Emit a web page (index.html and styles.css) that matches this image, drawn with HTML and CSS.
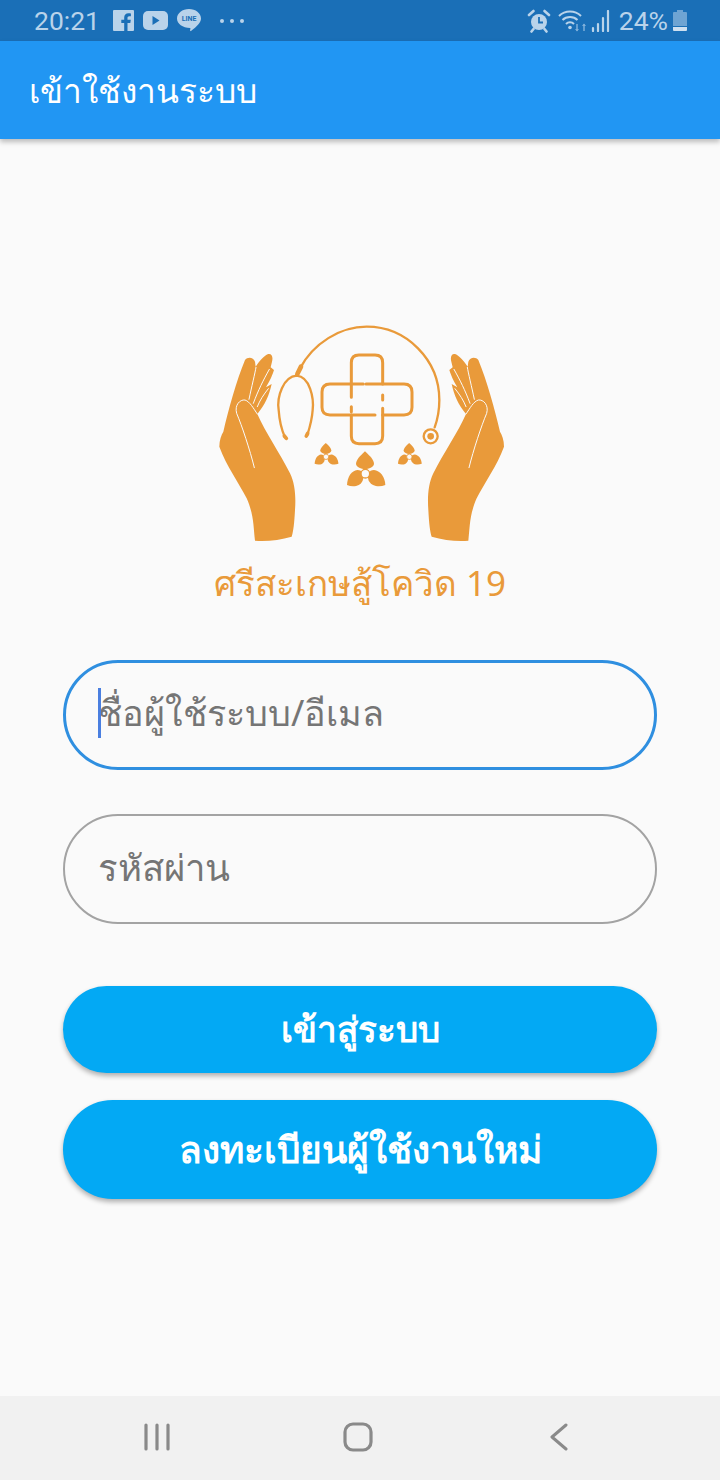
FILE: index.html
```html
<!DOCTYPE html>
<html lang="th">
<head>
	<meta charset="UTF-8">
	<title>เข้าใช้งานระบบ</title>
	<link rel="stylesheet" href="styles.css">
</head>
<body>
	<div class="status">
		<div class="status-left">
			<span class="clock">20:21</span>
			<svg class="ic-fb" width="21" height="21" viewBox="0 0 21 21"><path fill="#b9d3ea" d="M1 0h19a1 1 0 0 1 1 1v19a1 1 0 0 1-1 1h-5.500v-8h2.800l.5-3.200h-3.300V8c0-1 .4-1.700 1.800-1.700h1.600V3.400c-.8-.1-1.600-.2-2.500-.2-2.600 0-4.200 1.600-4.200 4.300v2.300H8.300V13h2.900v8H1a1 1 0 0 1-1-1V1a1 1 0 0 1 1-1z"/></svg>
			<svg class="ic-yt" width="25" height="19" viewBox="0 0 25 19"><rect width="25" height="19" rx="5" fill="#b9d3ea"/><path fill="#1a6fb7" d="M9.500 5l7 4.500-7 4.500z"/></svg>
			<svg class="ic-line" width="24" height="23" viewBox="0 0 24 23"><path fill="#b9d3ea" d="M12 0c6.600 0 12 4.200 12 9.500 0 4-4 7.800-10 12.500-.8.500-1-.3-.8-1.200l.2-1.900C5.800 19 0 15 0 9.500 0 4.200 5.400 0 12 0z"/><text x="12" y="12" class="line-txt">LINE</text></svg>
			<span class="dots"><i></i><i></i><i></i></span>
		</div>
		<div class="status-right">
			<svg class="ic-alarm" width="24" height="24" viewBox="0 0 24 24"><circle cx="12" cy="13" r="8" fill="#b9d3ea"/><path d="M12 8v5.500h4" fill="none" stroke="#1a6fb7" stroke-width="1.800"/><path d="M2 6l4.500-4M22 6l-4.500-4M6.500 20l-2 2.500M17.500 20l2 2.500" stroke="#b9d3ea" stroke-width="2.600" stroke-linecap="round"/></svg>
			<svg width="28" height="24" viewBox="0 0 28 24"><path d="M1 7c6-6 16-6 22 0M4.500 11c4-4 11-4 15 0M8 15c2.200-2.200 5.800-2.200 8 0" fill="none" stroke="#b9d3ea" stroke-width="2"/><circle cx="12" cy="18.500" r="1.800" fill="#b9d3ea"/><path d="M19 15v7M26 22v-7" stroke="#7fb0da" stroke-width="1.500"/><path d="M17 20l2 2.500 2-2.500M24 17l2-2.500 2 2.500" fill="#7fb0da"/></svg>
			<svg width="20" height="22" viewBox="0 0 20 22"><path d="M2 21v-3M7 21v-7M12 21V8M17 21V1" stroke="#b9d3ea" stroke-width="2.200" stroke-linecap="round"/></svg>
			<span class="pct">24%</span>
			<svg width="14" height="21" viewBox="0 0 14 21"><path fill="#6ea4d3" d="M4 0h6v2h3a1 1 0 0 1 1 1v13H0V3a1 1 0 0 1 1-1h3z"/><path fill="#cfe0f0" d="M0 17h14v3a1 1 0 0 1-1 1H1a1 1 0 0 1-1-1z"/></svg>
		</div>
	</div>

	<header class="appbar">เข้าใช้งานระบบ</header>

	<main class="content">
		<div class="logo">
			<svg width="320" height="240" viewBox="0 0 960 720">
				<!-- มือซ้าย -->
				<g id="hand">
					<path fill="#e99a3a" d="M165 692C160 650 162 615 140 565C115 515 80 470 58 410C58 390 64 375 70 365C85 300 110 210 135 150C142 140 160 140 165 155L167 170C180 150 195 135 205 132C215 130 220 140 216 155L212 172L222 180C214 205 206 218 198 232L215 222C208 255 195 285 172 312C195 365 240 430 270 490C285 520 288 560 285 600C283 640 280 665 275 680C240 690 200 695 165 692Z"/>
					<path fill="none" stroke="#fafafa" stroke-width="3" stroke-linecap="round" d="M163 473C150 420 125 345 110 310C103 285 120 268 135 270C150 275 160 295 172 312M147 268C155 230 165 190 168 172M160 280C175 240 190 210 208 178M172 290C180 270 190 255 205 236"/>
				</g>
				<use href="#hand" transform="matrix(-1 0 0 1 970 0)"/>
				<!-- หูฟัง -->
				<g fill="none" stroke="#e99a3a" stroke-linecap="round">
					<path stroke-width="7" d="M300 175C340 100 420 50 500 50C620 50 718 150 718 270C718 300 712 330 704 352"/>
					<path stroke-width="14" d="M303 170L292 192"/>
					<path stroke-width="7" d="M290 197C250 200 230 260 236 300C238 330 245 360 255 382M290 197C330 200 342 265 338 300C336 330 330 350 322 375"/>
					<path stroke-width="11" d="M253 378l6 7M323 370l-4 8"/>
					<circle cx="692" cy="379" r="21" stroke-width="7"/>
				</g>
				<circle cx="692" cy="379" r="10" fill="#e99a3a"/>
				<!-- กากบาท -->
				<g fill="none" stroke="#e99a3a" stroke-width="9" stroke-linecap="round" stroke-linejoin="round">
					<path d="M454 262V158Q454 135 477 135H525Q548 135 548 158V222H612Q636 222 636 246V292Q636 315 612 315H548V378Q548 401 525 401H477Q454 401 454 378V315H390Q366 315 366 292V246Q366 222 390 222H490"/>
					<path d="M454 315H525M548 222H498M454 290V305M548 255V270M548 295V315"/>
				</g>
				<!-- ดอกไม้ -->
				<g id="flower" fill="#e99a3a">
					<path d="M495 424C510 438 522 450 522 462C520 472 507 476 495 478C483 476 470 472 468 462C468 450 480 438 495 424Z"/>
					<path d="M441 525C442 500 455 482 472 480C488 480 494 495 488 512C480 530 458 532 441 525Z"/>
					<path d="M556 525C555 500 540 482 522 480C506 480 500 495 506 512C516 530 538 532 556 525Z"/>
					<circle cx="496" cy="491" r="13" fill="#fafafa" stroke="#e99a3a" stroke-width="4"/>
				</g>
				<use href="#flower" transform="translate(70.500 136) scale(.62)"/>
				<use href="#flower" transform="translate(320.500 136) scale(.62)"/>
			</svg>
			<div class="logo-name">ศรีสะเกษสู้โควิด 19</div>
		</div>

		<form class="login">
			<div class="field">
				<input class="input input-focus" type="text" placeholder="ชื่อผู้ใช้ระบบ/อีเมล">
				<span class="caret"></span>
			</div>
			<div class="field field-pass">
				<input class="input input-pass" type="password" placeholder="รหัสผ่าน">
			</div>
			<button class="btn btn-login" type="button">เข้าสู่ระบบ</button>
			<button class="btn btn-reg" type="button">ลงทะเบียนผู้ใช้งานใหม่</button>
		</form>
	</main>

	<nav class="navbar">
		<svg width="26" height="28" viewBox="0 0 26 28"><path d="M2 2v24M13 2v24M24 2v24" stroke="#8a8a8a" stroke-width="3.200" stroke-linecap="round"/></svg>
		<svg width="30" height="30" viewBox="0 0 30 30"><rect x="2" y="2" width="26" height="26" rx="8" fill="none" stroke="#8a8a8a" stroke-width="3.200"/></svg>
		<svg width="22" height="28" viewBox="0 0 22 28"><path d="M20 2L6 14l14 12" fill="none" stroke="#8a8a8a" stroke-width="3" stroke-linecap="round" stroke-linejoin="round"/></svg>
	</nav>
</body>
</html>
```

FILE: styles.css
```css
*{
	margin: 0;
	padding: 0;
	box-sizing: border-box;
}
body{
	width: 720px;
	height: 1480px;
	display: flex;
	flex-direction: column;
	background: #fafafa;
	font-family: "Noto Sans", "DejaVu Sans", "Liberation Sans", sans-serif;
	overflow: hidden;
}
.status{
	height: 41px;
	background: #1a6fb7;
	color: #b9d3ea;
	display: flex;
	justify-content: space-between;
	align-items: center;
	padding: 0 33px 0 34px;
}
.status-left,.status-right{
	display: flex;
	align-items: center;
}
.clock{
	font-family: Roboto, sans-serif;
	font-size: 26.500px;
	margin-right: 13px;
}
.ic-fb{
	margin-right: 9px;
}
.ic-yt{
	margin-right: 9px;
}
.line-txt{
	font-family: Roboto, sans-serif;
	font-size: 7px;
	font-weight: 700;
	fill: #1a6fb7;
	text-anchor: middle;
}
.dots{
	display: flex;
	gap: 6px;
	margin-left: 19px;
}
.dots i{
	width: 4px;
	height: 4px;
	border-radius: 50%;
	background: #b9d3ea;
}
.status-right{
	gap: 5px;
}
.ic-alarm{
	margin-right: 2px;
}
.pct{
	font-family: Roboto, sans-serif;
	font-size: 26.500px;
	margin-left: 3px;
}
.appbar{
	height: 98px;
	background: #2196f3;
	color: #fff;
	font-size: 33.500px;
	line-height: 98px;
	padding-left: 29px;
	box-shadow: 0 3px 5px rgba(0,0,0,.25);
	position: relative;
}
.content{
	flex: 1;
	padding: 171px 63px 0;
}
.logo{
	display: flex;
	flex-direction: column;
	align-items: center;
}
.logo-name{
	color: #e99a3a;
	font-size: 35px;
	line-height: 46px;
	margin-top: 10px;
}
.login{
	margin-top: 54px;
}
.field{
	position: relative;
	height: 110px;
}
.field-pass{
	margin-top: 44px;
}
.input{
	display: block;
	width: 100%;
	height: 100%;
	border: 2px solid #a3a3a3;
	border-radius: 55px;
	background: transparent;
	padding: 0 33px 5px;
	font-family: inherit;
	font-size: 36px;
	outline: none;
}
.input::placeholder{
	color: #757575;
	opacity: 1;
}
.input-focus{
	border: 3px solid #2f8fe0;
	padding: 0 32px 5px;
}
.input-pass{
	font-size: 36.500px;
}
.caret{
	position: absolute;
	left: 35px;
	top: 28px;
	width: 3px;
	height: 50px;
	background: #4a7fe0;
}
.btn{
	display: block;
	width: 100%;
	border: 0;
	color: #fff;
	background: #03a9f4;
	font-family: inherit;
	font-weight: 700;
	box-shadow: 0 3px 5px rgba(0,0,0,.3);
}
.btn-login{
	height: 87px;
	margin-top: 62px;
	border-radius: 44px;
	font-size: 35px;
}
.btn-reg{
	height: 99px;
	margin-top: 27px;
	border-radius: 50px;
	font-size: 37px;
}
.navbar{
	height: 84px;
	background: #f1f1f1;
	display: flex;
	align-items: center;
	justify-content: space-between;
	padding: 0 152px 3px 144px;
}
```
